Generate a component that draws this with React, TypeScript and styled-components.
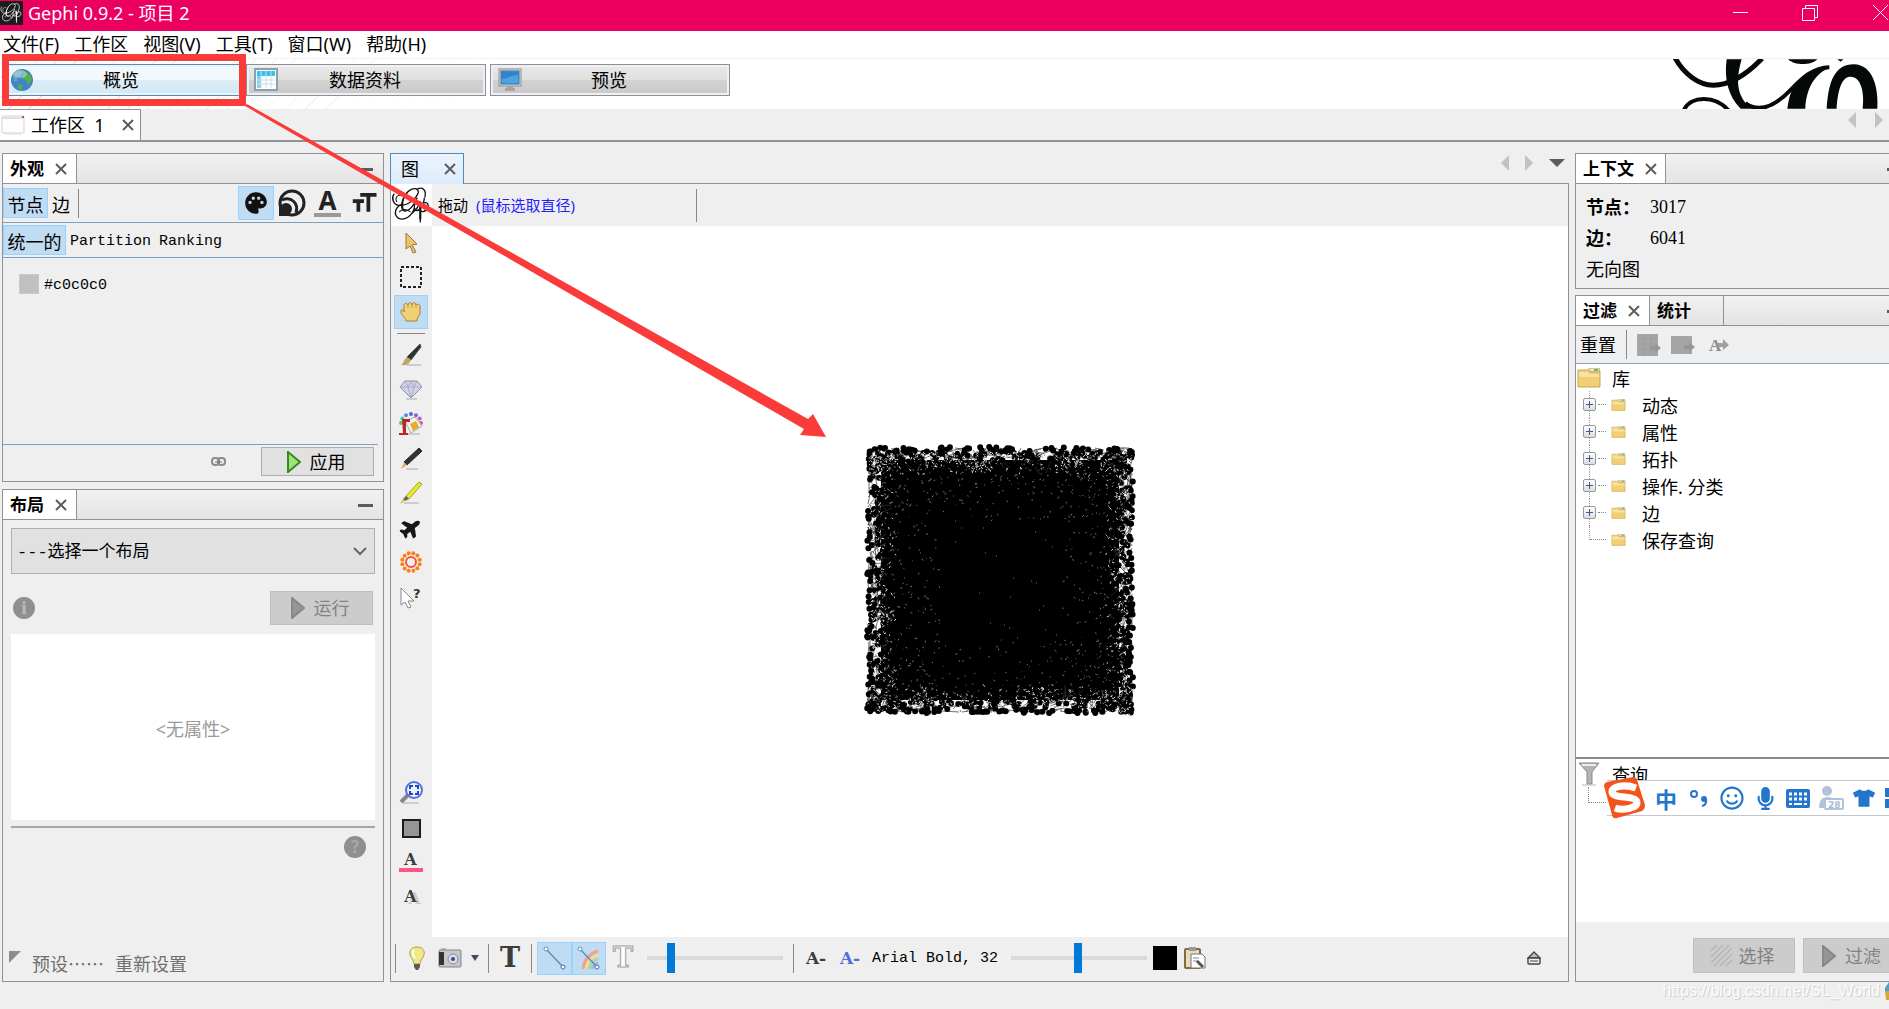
import React from "react";
import styled, { createGlobalStyle } from "styled-components";
import { MdPalette, MdFormatSize } from "react-icons/md";
import { FaPlane, FaRegSmile, FaMicrophone, FaTshirt } from "react-icons/fa";

const UI = `"Noto Sans", "Noto Sans CJK SC", sans-serif`;
const CJK = `"Noto Sans CJK SC", sans-serif`;
const MONO = `"Liberation Mono", "Noto Sans CJK SC", monospace`;
const SERIF = `"Liberation Serif", "Noto Sans CJK SC", serif`;

const line = "#8e929b";
const blueLine = "#7f9fbd";
const face = "#efefef";
const red = "#fb3a3a";

const GlobalStyle = createGlobalStyle`
  * { box-sizing: border-box; }
  body { margin: 0; background: ${face}; color: #000; font: 18px/24px ${UI}; overflow: hidden; }
  button, select, input { font: inherit; color: inherit; margin: 0; }
  svg { display: block; flex: none; }
`;

const Frame = styled.div`
  position: relative;
  min-height: 100vh;
  display: flex;
  flex-direction: column;
  overflow: hidden;
`;

/* ---------- window chrome ---------- */
const TitleBar = styled.header`
  height: 31px;
  display: flex;
  align-items: center;
  background: #ec005f;
  color: #fff;
`;
const Title = styled.h1`
  margin: 0 auto 5px 5px;
  font: 400 18px/24px ${UI};
`;
const TitleIcon = styled.div`
  margin-bottom: 5px;
`;
const WindowButton = styled.button`
  width: 69px;
  height: 31px;
  padding: 0 0 6px;
  border: 0;
  background: none;
  display: flex;
  align-items: center;
  justify-content: center;
  &:last-child { width: 45px; justify-content: flex-end; padding-right: 1px; }
`;
const MenuBar = styled.nav`
  height: 28px;
  display: flex;
  gap: 15px;
  padding: 1px 3px 0;
  background: #fff;
  border-bottom: 1px solid #f2f2f2;
`;
const MenuItem = styled.button`
  border: 0;
  padding: 0;
  height: 24px;
  background: none;
  font: 18px/24px ${UI};
`;
const Banner = styled.div`
  height: 50px;
  display: flex;
  align-items: flex-start;
  gap: 4px;
  padding: 5px 0 0 2px;
  background:
    linear-gradient(90deg, rgba(255, 255, 255, 0.2), #fff 500px),
    repeating-linear-gradient(135deg, #fff 0 13px, #dcdcdc 13px 14px);
`;
const BannerLogo = styled.div`
  margin: -5px 0 0 auto;
`;
const ModeSlot = styled.div`
  position: relative;
  width: 240px;
`;
const ModeButton = styled.button<{ $active?: boolean }>`
  width: 100%;
  height: 32px;
  display: grid;
  grid-template-columns: 24px 1fr 26px;
  align-items: center;
  padding: 0 7px;
  border: 1px solid ${(p) => (p.$active ? "#5f87ac" : "#8b8f99")};
  box-shadow: inset 0 0 0 2px ${(p) => (p.$active ? "#e6f4fb" : "#f0f0f2")};
  background: ${(p) =>
    p.$active
      ? "linear-gradient(#f2f9fd 0 50%, #dcedf6 50%, #d3e8f3)"
      : "linear-gradient(#e9e9e9, #e0e0e0 50%, #d2d2d2 50%, #c9c9c9)"};
`;
const RedFrame = styled.div`
  position: absolute;
  inset: -10px -4px -10px 0;
  border: 7px solid ${red};
  pointer-events: none;
`;
const WorkspaceBar = styled.div`
  height: 33px;
  display: flex;
  align-items: stretch;
  background: ${face};
  border-bottom: 2px solid ${line};
`;
const WorkspaceTab = styled.div`
  width: 141px;
  display: flex;
  align-items: center;
  gap: 6px;
  padding: 0 6px 0 1px;
  background: #fff;
  border: 1px solid ${line};
  border-width: 1px 1px 0 0;
`;
const Grow = styled.div`
  flex: 1;
`;
const Arrows = styled.div<{ $gap: number; $end: number }>`
  display: flex;
  align-items: center;
  margin-left: auto;
  gap: ${(p) => p.$gap}px;
  padding: 0 ${(p) => p.$end}px 10px 0;
`;
const PlainButton = styled.button`
  border: 0;
  padding: 0;
  background: none;
  display: flex;
  align-items: center;
  justify-content: center;
`;

/* ---------- docking panels ---------- */
const Main = styled.main`
  flex: 1;
  display: grid;
  grid-template-columns: 382px 1fr 314px;
  gap: 6px;
  padding: 11px 0 0 2px;
`;
const Column = styled.div<{ $gap: number }>`
  display: flex;
  flex-direction: column;
  gap: ${(p) => p.$gap}px;
  min-width: 0;
`;
const Panel = styled.section<{ $grow?: boolean; $bleed?: boolean }>`
  ${(p) => p.$grow && "flex: 1;"}
  display: flex;
  flex-direction: column;
  border: 1px solid ${line};
  ${(p) => p.$bleed && "border-right: 0;"}
`;
const PanelTabs = styled.div`
  height: 30px;
  display: flex;
  border-bottom: 1px solid ${line};
  background: linear-gradient(#f1f1f1, #e4e4e4);
`;
const PanelTab = styled.div<{ $idle?: boolean }>`
  min-width: 74px;
  display: flex;
  align-items: center;
  gap: 11px;
  padding: 0 8px 0 7px;
  font: 700 17px/22px ${UI};
  background: ${(p) => (p.$idle ? "transparent" : "#fff")};
  border-right: 1px solid ${line};
`;
const MinBar = styled.button<{ $cut?: boolean }>`
  width: 15px;
  height: 3px;
  padding: 0;
  border: 0;
  margin: 14px ${(p) => (p.$cut ? -13 : 10)}px 0 auto;
  background: #5c5c5c;
`;
const Strip = styled.div<{ $h: number }>`
  height: ${(p) => p.$h}px;
  display: flex;
  align-items: center;
  border-bottom: 1px solid ${blueLine};
`;
const Toggle = styled.button<{ $on?: boolean; $w?: number; $h?: number; $mono?: boolean }>`
  height: ${(p) => p.$h ?? 30}px;
  ${(p) => p.$w && `width: ${p.$w}px;`}
  padding: ${(p) => (p.$h ? 0 : 3)}px 3px 0;
  display: flex;
  align-items: center;
  justify-content: center;
  border: 1px solid ${(p) => (p.$on ? "#99d1ff" : "transparent")};
  background: ${(p) => (p.$on ? "#c0dcf3" : "none")};
  ${(p) => p.$mono && `font: 15px/20px ${MONO};`}
`;
const Sep = styled.span<{ $h?: number }>`
  width: 1px;
  height: ${(p) => p.$h ?? 29}px;
  background: #888;
  flex: none;
`;
const Mono = styled.span`
  padding-top: 2px;
  font: 15px/20px ${MONO};
`;
const Underlined = styled.span`
  width: 27px;
  height: 28px;
  font: 700 26px/22px ${UI};
  text-align: center;
  color: #222;
  border-bottom: 4px solid #9a9a9a;
`;
const AppearanceIcons = styled.div`
  margin-left: auto;
  display: flex;
  align-items: center;
  gap: 4px;
  padding-right: 4px;
`;
const ColorRow = styled.div`
  height: 186px;
  display: flex;
  align-items: flex-start;
  gap: 5px;
  padding: 16px;
`;
const Swatch = styled.button<{ $c: string; $s: number; $flat?: boolean }>`
  width: ${(p) => p.$s}px;
  height: ${(p) => p.$s}px;
  padding: 0;
  background: ${(p) => p.$c};
  border: 1px solid ${(p) => (p.$flat ? p.$c : "#c9c9c9")};
`;
const ApplyRow = styled.div`
  height: 37px;
  display: flex;
  align-items: flex-start;
  justify-content: flex-end;
  gap: 35px;
  margin-right: 5px;
  padding: 2px 4px 0 0;
  border-top: 1px solid ${blueLine};
`;
const LinkIcon = styled(PlainButton)`
  height: 28px;
`;
const PushButton = styled.button<{ $w: number; $h: number; $gap?: number }>`
  width: ${(p) => p.$w}px;
  height: ${(p) => p.$h}px;
  flex: none;
  display: flex;
  align-items: center;
  justify-content: center;
  gap: ${(p) => p.$gap ?? 9}px;
  padding: 0 3px 0 0;
  border: 1px solid #adadad;
  background: #e1e1e1;
  &:disabled { color: #838383; background: #ccc; border-color: #bfbfbf; }
`;
const LayoutBody = styled.div`
  flex: 1;
  display: flex;
  flex-direction: column;
  padding: 8px 8px 6px;
`;
const SelectWrap = styled.label`
  display: grid;
  align-items: center;
  & > * { grid-area: 1 / 1; }
  & > svg { justify-self: end; margin-right: 8px; pointer-events: none; }
`;
const Select = styled.select`
  width: 100%;
  height: 46px;
  padding: 4px 5px 0;
  appearance: none;
  border: 1px solid #adadb2;
  border-radius: 0;
  background: #e1e1e1;
  font: 17px/24px ${MONO};
`;
const RunRow = styled.div`
  display: flex;
  align-items: center;
  justify-content: space-between;
  padding: 17px 2px 9px;
`;
const Badge = styled.button`
  width: 22px;
  height: 22px;
  padding: 0;
  border: 0;
  border-radius: 50%;
  background: #8f8f8f;
  color: #b9b9b9;
  font: 700 17px/22px "DejaVu Serif", serif;
`;
const HelpBadge = styled(Badge)`
  align-self: flex-end;
  margin: 8px 9px 0 0;
  color: #a8a8a8;
  font-family: ${UI};
`;
const Properties = styled.div`
  height: 186px;
  display: flex;
  align-items: center;
  justify-content: center;
  padding-top: 3px;
  background: #fff;
  color: #999;
`;
const Rule = styled.hr`
  width: 100%;
  height: 2px;
  margin: 6px 0 0;
  border: 0;
  background: #a6a6a6;
`;
const PresetRow = styled.div`
  margin: auto 0 0 -2px;
  display: flex;
  gap: 11px;
  color: #6f6f6f;
  font: 18px/24px ${CJK};
`;

/* ---------- graph window ---------- */
const GraphWindow = styled.section`
  display: flex;
  flex-direction: column;
  min-width: 0;
`;
const GraphTabs = styled.div`
  height: 31px;
  display: flex;
`;
const GraphTab = styled.div`
  width: 74px;
  display: flex;
  align-items: center;
  justify-content: space-between;
  padding: 0 7px 1px 10px;
  border: 1px solid #4b8cc0;
  border-bottom: 0;
  background: linear-gradient(#ecf4fc, #dcebfc);
`;
const GraphTabFill = styled.div`
  flex: 1;
  display: flex;
  border-bottom: 1px solid ${line};
`;
const GraphBody = styled.div`
  flex: 1;
  display: flex;
  flex-direction: column;
  border: 1px solid ${line};
  border-top: 0;
`;
const MouseBar = styled.div`
  height: 42px;
  display: flex;
  align-items: center;
  font: 15px/20px ${UI};
`;
const MouseLabel = styled.span`
  width: 38px;
  margin-left: 6px;
`;
const MouseHint = styled.button`
  width: 220px;
  padding: 0;
  border: 0;
  background: none;
  color: #1f1fff;
  text-align: left;
  font: 15px/20px ${UI};
`;
const Stage = styled.div`
  flex: 1;
  display: flex;
`;
const Tools = styled.div`
  width: 41px;
  display: flex;
  flex-direction: column;
  padding: 0 2px 23px 0;
`;
const ToolGroup = styled.div<{ $h: number; $end?: boolean }>`
  height: ${(p) => p.$h}px;
  display: flex;
  flex-direction: column;
  align-items: center;
  ${(p) => p.$end && "margin-top: auto;"}
`;
const Tool = styled.button<{ $on?: boolean }>`
  flex: 1;
  width: 34px;
  padding: 0;
  display: flex;
  align-items: center;
  justify-content: center;
  border: 1px solid ${(p) => (p.$on ? "#99d1ff" : "transparent")};
  background: ${(p) => (p.$on ? "#c0dcf3" : "none")};
`;
const ToolRule = styled.hr`
  width: 28px;
  height: 1px;
  margin: 4px auto;
  border: 0;
  background: #888;
`;
const Glyph = styled.span<{ $size: number; $c?: string; $bar?: boolean; $shade?: boolean; $hollow?: boolean }>`
  width: 24px;
  text-align: center;
  font: 700 ${(p) => p.$size}px/${(p) => (p.$bar ? 16 : 24)}px "DejaVu Serif", serif;
  color: ${(p) => p.$c ?? "#3c3c3c"};
  ${(p) => p.$bar && "border-bottom: 4px solid #ff5585;"}
  ${(p) => p.$shade && "text-shadow: 4px 2px 0 #ccc;"}
  ${(p) => p.$hollow && "-webkit-text-stroke: 1px #9d9d9d;"}
`;
const Canvas = styled.div`
  flex: 1;
  display: flex;
  align-items: center;
  justify-content: center;
  padding-bottom: 4px;
  background: #fff;
`;
const BottomBar = styled.div`
  height: 44px;
  display: flex;
  align-items: center;
  padding: 0 27px 2px 4px;
`;
const Cluster = styled.div<{ $gap: number; $ml?: number }>`
  display: flex;
  align-items: center;
  gap: ${(p) => p.$gap}px;
  margin-left: ${(p) => p.$ml ?? 0}px;
`;
const Pair = styled.div`
  display: flex;
`;
const Range = styled.input`
  appearance: none;
  width: 136px;
  height: 30px;
  background: linear-gradient(#dadada, #dadada) center / 100% 4px no-repeat;
  &::-webkit-slider-thumb {
    appearance: none;
    width: 8px;
    height: 30px;
    background: #007ad9;
  }
`;

/* ---------- right column ---------- */
const Stats = styled.dl`
  margin: 0;
  height: 104px;
  padding: 7px 10px 0;
  display: grid;
  grid-template-columns: 64px 1fr;
  grid-auto-rows: 31px;
  align-items: center;
  dt { font-weight: 700; }
  dd { margin: 0; font: 18px/24px ${SERIF}; }
`;
const FilterBar = styled(Strip)`
  gap: 10px;
  padding-left: 4px;
`;
const Tree = styled.ul`
  list-style: none;
  margin: 0;
  padding: 0 1px;
  height: 393px;
  background: #fff;
`;
const TreeRow = styled.li<{ $last?: boolean }>`
  position: relative;
  height: 27px;
  display: flex;
  align-items: center;
  padding-left: 6px;
  &::before {
    content: "";
    position: absolute;
    left: 12px;
    top: 0;
    height: ${(p) => (p.$last ? 14 : 27)}px;
    border-left: 1px dotted #999;
  }
`;
const Expander = styled.button`
  position: relative;
  width: 13px;
  height: 13px;
  padding: 0;
  border: 1px solid #999;
  border-radius: 2px;
  background:
    linear-gradient(#3a55a4, #3a55a4) center / 7px 1px no-repeat,
    linear-gradient(#3a55a4, #3a55a4) center / 1px 7px no-repeat,
    linear-gradient(#fff, #ddd);
`;
const Dots = styled.span<{ $w: number; $ml?: number }>`
  width: ${(p) => p.$w}px;
  margin: 0 5px 0 ${(p) => p.$ml ?? 2}px;
  border-top: 1px dotted #888;
`;
const TreeText = styled.span<{ $gap: number }>`
  margin: 3px 0 0 ${(p) => p.$gap}px;
  line-height: 24px;
`;
const TreeRoot = styled.li`
  height: 27px;
  display: flex;
  align-items: center;
`;
const Queries = styled.div`
  position: relative;
  flex: 1;
  background: #fff;
  border-top: 2px solid #8a8a8a;
`;
const QueryRow = styled.div`
  display: flex;
  padding: 1px 2px 0;
  align-items: center;
`;
const QueryBranch = styled.div`
  width: 18px;
  height: 16px;
  margin-left: 12px;
  border: 1px dotted #888;
  border-width: 0 0 1px 1px;
`;
const Ime = styled.div`
  position: absolute;
  left: 31px;
  right: 0;
  top: 21px;
  height: 36px;
  display: flex;
  align-items: center;
  background: #fff;
  border: 1px solid #c3c6cc;
  border-width: 1px 0;
  color: #2277cd;
`;
const ImeLogo = styled.div`
  margin: 0 8px 0 -4px;
`;
const ImeKeys = styled.div`
  display: flex;
  align-items: center;
  gap: 9px;
`;
const ImeKey = styled(PlainButton)`
  width: 24px;
  height: 30px;
  flex: none;
  font: 700 22px/28px ${CJK};
`;
const FilterActions = styled.div`
  height: 59px;
  display: flex;
  justify-content: flex-end;
  gap: 8px;
  padding-top: 16px;
  margin-right: -14px;
`;
const StatusBar = styled.footer`
  height: 27px;
  display: flex;
  justify-content: flex-end;
  align-items: center;
  gap: 5px;
  padding-bottom: 10px;
`;
const Watermark = styled.span`
  font: 16px/18px "Liberation Sans", sans-serif;
  color: #fbfbfb;
  text-shadow: 1px 1px 0 #d0d0d0;
`;
const ArrowLayer = styled.svg`
  position: absolute;
  left: 245px;
  top: 104px;
  pointer-events: none;
`;

/* ---------- drawings ---------- */
const Svg = ({ w = 24, h = w, box, children }: { w?: number; h?: number; box?: string; children: React.ReactNode }) => (
  <svg width={w} height={h} viewBox={box ?? `0 0 ${w} ${h}`} fill="none" aria-hidden="true">
    {children}
  </svg>
);
const Cross = () => (
  <Svg w={12}><path d="M1 1L11 11M11 1L1 11" stroke="#5d5d5d" strokeWidth="2" /></Svg>
);
const Tri = ({ dir, c = "#c2c2c2" }: { dir: "l" | "r" | "d"; c?: string }) => (
  <Svg w={dir === "d" ? 16 : 8} h={dir === "d" ? 8 : 16}>
    <path d={dir === "l" ? "M8 0V16L0 8z" : dir === "r" ? "M0 0V16L8 8z" : "M0 0H16L8 8z"} fill={c} />
  </Svg>
);
const GephiMark = ({ w, h, ink, paper }: { w: number; h: number; ink: string; paper: string }) => (
  <Svg w={w} h={h} box="36 118 120 124">
    <rect x="36" y="118" width="120" height="124" fill={paper} />
    <g stroke={ink} strokeWidth="4" strokeLinecap="round">
      <path d="M44 148C36 160 42 178 58 181C84 184 112 160 116 143C118 130 100 127 86 140C68 158 62 186 72 196C86 204 106 178 112 160" />
      <path d="M70 176C48 186 42 206 56 218C76 230 98 210 104 190M96 206C108 196 122 178 118 172C108 160 98 190 110 196C122 198 132 180 134 160" />
      <path d="M112 134C128 124 140 136 136 156M122 170V230M122 184C130 168 148 170 145 186C142 200 126 202 122 196" />
      <path d="M52 170C46 158 56 148 66 152M60 200C70 190 84 192 92 200" strokeWidth="3" />
    </g>
    <path d="M92 134C72 152 66 184 76 198L68 192C62 176 74 146 92 134Z" fill={ink} />
    <path d="M119 172H125V222H119z" fill={ink} />
  </Svg>
);
const BannerMark = () => (
  <Svg w={217} h={50} box="336 178 651 149">
    <g stroke="#060909" strokeWidth="13">
      <path d="M345 174C372 222 415 256 460 256C512 256 558 226 606 176" strokeWidth="15" />
      <path d="M372 330C392 288 464 284 506 332" strokeWidth="12" />
      <path d="M556 310C600 342 648 316 692 270C724 238 756 203 808 202" strokeWidth="12" />
    </g>
    <g fill="#060909">
      <path d="M500 178H545C528 236 526 292 578 327H542C504 288 492 236 500 178z" />
      <path d="M808 204C764 222 738 268 736 327H682C690 280 690 262 752 214z" />
      <path d="M684 178C704 197 752 198 772 178zM832 178H850L842 186z" />
      <path d="M800 327C805 248 822 193 882 193C938 194 956 262 952 327H908C914 280 904 230 870 231C840 232 832 290 830 327z" />
    </g>
  </Svg>
);
const Globe = () => (
  <Svg>
    <circle cx="12" cy="12" r="11" fill="#3f83c8" />
    <path d="M3 8C6 2 11 1 13 4L10 8L7 9L8 13L4 14z" fill="#5ba5b4" />
    <path d="M14 4L20 6L22 12L18 17L16 12L12 11zM8 16L13 17L11 22L8 20z" fill="#54b04f" />
    <ellipse cx="10" cy="6" rx="7" ry="4" fill="#fff" opacity=".35" />
  </Svg>
);
const Sheet = () => (
  <Svg>
    <rect x="1" y="1" width="22" height="21" fill="#fff" stroke="#8aa0aa" strokeWidth="2" />
    <path d="M3 3H21V8H3z" fill="#35c0f4" /><path d="M3 8H7V20H3z" fill="#7fd4f5" />
    <path d="M3 12H21M3 16H21M7 3V20M12 3V20M17 3V20" stroke="#c6e0ea" />
  </Svg>
);
const Monitor = () => (
  <Svg>
    <rect x="1" y="1" width="22" height="17" fill="#ddd" stroke="#8e8e8e" />
    <rect x="3" y="3" width="18" height="13" fill="#4ba2e4" stroke="#2d70ae" />
    <path d="M4 11C10 10 14 7 20 7V4H4z" fill="#3382cb" />
    <path d="M9 18H15V20H17V23H7V20H9z" fill="#a5a5a5" />
  </Svg>
);
const WindowIcon = () => (
  <Svg w={24} h={20}>
    <rect x="1" y="1" width="22" height="17" rx="1" fill="#fdfdfd" stroke="#d3d3d3" />
    <path d="M1 2H23V4H1z" fill="#e3dfe0" /><path d="M21 1H23V3H21z" fill="#c7475c" />
    <path d="M3 19H21" stroke="#ddd" />
  </Svg>
);
const Play = ({ off }: { off?: boolean }) => (
  <Svg w={14} h={22}>
    <path d="M1 1L13 11L1 21z" fill={off ? "#969696" : "#a5e07c"} stroke={off ? "#888" : "#2f8f1d"} strokeWidth="2" />
  </Svg>
);
const SizeRings = () => (
  <Svg w={28}>
    <g stroke="#222" strokeWidth="3">
      <circle cx="14" cy="14" r="12" />
      <path d="M4 11C13 7 21 14 18 24" />
    </g>
    <path d="M1 14V27H14L9 22L4 18z" fill="#222" />
    <circle cx="8" cy="20" r="6" fill="#222" />
  </Svg>
);
const Folder = ({ w, h }: { w: number; h: number }) => (
  <Svg w={w} h={h} box="0 0 24 20">
    <path d="M12 0H22L23 4H12z" fill="#f5e6ae" stroke="#c9a85a" /><path d="M17 1H21V3H17z" fill="#4ab6cc" />
    <path d="M1 2H11L13 4H23V19H1z" fill="#f0cf75" stroke="#cda650" />
    <path d="M2 4H11L13 6H22V9H2z" fill="#f8e2a0" />
  </Svg>
);
const toolTop: React.ReactNode[] = [
  <Svg><path d="M7 2L18 13L13 14L17 21L14 22L11 15L7 18z" fill="#ecc56a" stroke="#9c7733" /></Svg>,
  <Svg><rect x="2" y="2" width="20" height="20" stroke="#222" strokeWidth="2" strokeDasharray="3 2" /></Svg>,
  <Svg>
    <path d="M5 7C4 3 8 2 9 5C9 2 13 2 13 5C13 2 17 2 17 5C19 3 22 5 21 8V14C19 17 18 18 18 21H7C7 17 1 15 2 11C2 9 4 9 5 12z" fill="#f1cf74" stroke="#a5813c" />
    <path d="M9 5V8M13 5V8M17 5V8" stroke="#c29a4c" />
  </Svg>,
];
const toolMid: React.ReactNode[] = [
  <Svg><path d="M8 22H22" stroke="#ccc" strokeWidth="2" /><path d="M21 1L22 4L12 17L8 14z" fill="#303030" stroke="#555" /><path d="M8 14L12 17C10 22 5 23 2 22C5 20 5 16 8 14z" fill="#bba66c" /></Svg>,
  <Svg><path d="M7 21H18" stroke="#ccc" strokeWidth="2" /><path d="M6 3H18L23 9L12 20L1 9z" fill="#d2d3ea" stroke="#8b8daa" /><path d="M1 9H23M6 3L9 9L12 20L15 9L18 3M9 9L12 3L15 9" stroke="#a9abc6" /></Svg>,
  <Svg>
    {["#5fc45f", "#45c6ad", "#4d8ee5", "#5963d8", "#8d5fcb", "#c857c2", "#e05590"].map((c, i) => (
      <circle key={c} cx={12 - 10 * Math.cos((i * Math.PI) / 6)} cy={11 - 9 * Math.sin((i * Math.PI) / 6)} r="2" fill={c} />
    ))}
    <path d="M8 22H21" stroke="#ccc" strokeWidth="2" />
    <path d="M6 9L16 5L23 14L12 21z" fill="#f4f4f4" stroke="#aaa" /><path d="M11 12L17 9L20 15L14 19z" fill="#e7ab26" />
    <path d="M3 7H11V10H7V21H9V23H0V21H4z" fill="#b9252a" />
  </Svg>,
  <Svg><path d="M7 22H19" stroke="#ccc" strokeWidth="2" /><path d="M20 1L23 4L8 18L5 15z" fill="#333" stroke="#222" /><path d="M5 15L8 18L2 22z" fill="#d3b070" /></Svg>,
  <Svg><path d="M5 22H20" stroke="#ccc" strokeWidth="2" /><path d="M20 1L23 3L10 18L7 15z" fill="#e8e82c" stroke="#aaa51b" /><path d="M7 15L10 18L6 20L4 18z" fill="#666" /><path d="M4 18L6 20L1 23z" fill="#cccc25" /></Svg>,
  <FaPlane size={22} color="#161616" style={{ transform: "rotate(-38deg)" }} />,
  <Svg>
    <circle cx="12" cy="12" r="5" stroke="#fb5236" strokeWidth="2" />
    {Array.from({ length: 12 }, (_, i) => {
      const a = (i * Math.PI) / 6 + 0.26;
      return <circle key={i} cx={12 + 9 * Math.cos(a)} cy={12 + 9 * Math.sin(a)} r="2" fill="#ff7d18" />;
    })}
  </Svg>,
  <Svg><path d="M2 3V20L6 17L9 23L12 22L9 16H15z" fill="#fff" stroke="#888" /><text x="14" y="13" fontFamily="DejaVu Sans" fontWeight="700" fontSize="13" fill="#333">?</text></Svg>,
];
const toolEnd: React.ReactNode[] = [
  <Svg><path d="M4 22H20" stroke="#ccc" strokeWidth="2" /><path d="M9 14L2 21" stroke="#888" strokeWidth="4" /><circle cx="15" cy="9" r="8" fill="#eaf1ff" stroke="#5272dc" strokeWidth="2" /><path d="M11 8V5H14M16 5H19V8M19 10V13H16M14 13H11V10" stroke="#2446b4" strokeWidth="2" /></Svg>,
  <Svg><rect x="4" y="4" width="17" height="17" fill="#969696" stroke="#1d1d1d" strokeWidth="2" /></Svg>,
  <Glyph $size={16} $bar>A</Glyph>,
  <Glyph $size={16} $shade>A</Glyph>,
];
const toolNames = ["选择", "矩形选择", "拖动", "画笔", "大小", "填充", "节点铅笔", "边铅笔", "最短路径", "热图", "编辑", "居中", "背景色", "标签颜色", "标签阴影"];

const EdgeIcon = ({ rainbow }: { rainbow?: boolean }) => (
  <Svg w={26}>
    {rainbow && (
      <g strokeWidth="3">
        <path d="M7 24C8 15 13 9 22 6" stroke="#f3a094" /><path d="M10 24C11 17 15 12 22 10" stroke="#efdc9a" />
        <path d="M13 24C14 19 17 15 22 14" stroke="#a6d8a8" /><path d="M16 24C17 21 19 19 22 18" stroke="#b1b2e8" />
      </g>
    )}
    <path d="M4 4L21 22" stroke="#5a8fc2" strokeWidth="1.5" />
    <circle cx="4" cy="4" r="2" fill="#fff" stroke="#5a8fc2" /><circle cx="21" cy="22" r="2" fill="#fff" stroke="#3c6bb0" />
  </Svg>
);

/* A dense hairball: dots around a ragged square, with light showing through near its border. */
const SIZE = 276;
function buildGraph() {
  let seed = 90217;
  const rnd = () => {
    seed = (seed * 1664525 + 1013904223) % 4294967296;
    return seed / 4294967296;
  };
  const side = (d: number): [number, number] => {
    const t = 6 + rnd() * (SIZE - 12);
    const k = Math.floor(rnd() * 4);
    return k === 0 ? [t, d] : k === 1 ? [t, SIZE - d] : k === 2 ? [d, t] : [SIZE - d, t];
  };
  const dot = (x: number, y: number, r: number) =>
    `M${(x - r).toFixed(1)} ${y.toFixed(1)}a${r} ${r} 0 1 0 ${2 * r} 0a${r} ${r} 0 1 0 ${-2 * r} 0`;
  const jot = (x: number, y: number, len: number) =>
    `M${x.toFixed(1)} ${y.toFixed(1)}l${((rnd() - 0.5) * len).toFixed(1)} ${((rnd() - 0.5) * len).toFixed(1)}`;
  let dots = "";
  let strands = "";
  let holes = "";
  let faint = "";
  for (let i = 0; i < 520; i++) {
    const [x, y] = side(5 + rnd() * 12);
    dots += dot(x, y, 3);
  }
  for (let i = 0; i < 380; i++) {
    const [x, y] = side(14 + rnd() * 14);
    dots += dot(x, y, 3);
  }
  for (let i = 0; i < 520; i++) {
    const [x, y] = side(6 + rnd() * 10);
    const c = (n: number) => Math.min(SIZE - 6, Math.max(6, n)).toFixed(0);
    strands += `M${c(x)} ${c(y)}L${c(x + (rnd() - 0.5) * 36)} ${c(y + (rnd() - 0.5) * 36)}`;
  }
  for (let i = 0; i < 640; i++) {
    const [x, y] = side(11 + Math.pow(rnd(), 1.7) * 22);
    holes += jot(x, y, 5);
  }
  for (let n = 0; n < 34; n++) {
    const [cx, cy] = side(14 + rnd() * 12);
    for (let i = 0; i < 12; i++) holes += jot(cx + (rnd() - 0.5) * 16, cy + (rnd() - 0.5) * 10, 4);
  }
  for (let i = 0; i < 1100; i++) {
    const [x, y] = side(14 + Math.pow(rnd(), 1.9) * 64);
    faint += jot(x, y, 4);
  }
  for (let i = 0; i < 60; i++) faint += `M${(30 + rnd() * 216).toFixed(0)} ${(30 + rnd() * 216).toFixed(0)}h1`;
  return { dots, strands, holes, faint };
}
const graph = buildGraph();
const Hairball = () => (
  <svg width={SIZE} height={SIZE} viewBox={`0 0 ${SIZE} ${SIZE}`} role="img" aria-label="图">
    <rect x="19" y="18" width="238" height="240" />
    <path d={graph.strands} stroke="#333" strokeWidth="0.7" />
    <path d={graph.dots} />
    <path d={graph.holes} stroke="#dedede" strokeWidth="1" />
    <path d={graph.faint} stroke="#808080" strokeWidth="0.9" />
  </svg>
);

const menus = ["文件(F)", "工作区", "视图(V)", "工具(T)", "窗口(W)", "帮助(H)"];
const library = ["动态", "属性", "拓扑", "操作. 分类", "边", "保存查询"];

export default function App() {
  return (
    <Frame>
      <GlobalStyle />
      <TitleBar>
        <TitleIcon><GephiMark w={23} h={24} ink="#eee" paper="#1c1c1c" /></TitleIcon>
        <Title>Gephi 0.9.2 - 项目 2</Title>
        <WindowButton aria-label="最小化"><Svg w={15}><path d="M0 7.5H15" stroke="#fff" /></Svg></WindowButton>
        <WindowButton aria-label="还原"><Svg w={16}><path d="M.5 3.5H12.5V15.5H.5zM3.5 3.5V.5H15.5V12.5H12.5" stroke="#fff" /></Svg></WindowButton>
        <WindowButton aria-label="关闭"><Svg w={15}><path d="M0 0L15 15M15 0L0 15" stroke="#fff" /></Svg></WindowButton>
      </TitleBar>
      <MenuBar>{menus.map((m) => <MenuItem key={m}>{m}</MenuItem>)}</MenuBar>
      <Banner>
        <ModeSlot>
          <ModeButton $active><Globe />概览</ModeButton>
          <RedFrame />
        </ModeSlot>
        <ModeSlot><ModeButton><Sheet />数据资料</ModeButton></ModeSlot>
        <ModeSlot><ModeButton><Monitor />预览</ModeButton></ModeSlot>
        <BannerLogo><BannerMark /></BannerLogo>
      </Banner>
      <WorkspaceBar>
        <WorkspaceTab>
          <WindowIcon />
          工作区&nbsp; 1
          <Grow />
          <PlainButton aria-label="关闭工作区"><Cross /></PlainButton>
        </WorkspaceTab>
        <Arrows $gap={19} $end={6}><Tri dir="l" /><Tri dir="r" /></Arrows>
      </WorkspaceBar>

      <Main>
        <Column $gap={7}>
          <Panel>
            <PanelTabs>
              <PanelTab>外观<PlainButton aria-label="关闭"><Cross /></PlainButton></PanelTab>
              <MinBar aria-label="最小化" />
            </PanelTabs>
            <Strip $h={39}>
              <Toggle $on $w={45}>节点</Toggle>
              <Toggle $w={26}>边</Toggle>
              <Cluster $gap={0} $ml={4}><Sep /></Cluster>
              <AppearanceIcons>
                <Toggle $on $w={36} $h={34} aria-label="颜色"><MdPalette size={26} color="#111" /></Toggle>
                <PlainButton aria-label="大小"><SizeRings /></PlainButton>
                <Toggle $w={35} $h={34} aria-label="标签颜色"><Underlined>A</Underlined></Toggle>
                <PlainButton aria-label="标签尺寸"><MdFormatSize size={30} color="#222" /></PlainButton>
              </AppearanceIcons>
            </Strip>
            <Strip $h={35}>
              <Toggle $on $w={63}>统一的</Toggle>
              <Toggle $mono>Partition</Toggle>
              <Toggle $mono>Ranking</Toggle>
            </Strip>
            <ColorRow>
              <Swatch $c="#c0c0c0" $s={20} aria-label="#c0c0c0" />
              <Mono>#c0c0c0</Mono>
            </ColorRow>
            <ApplyRow>
              <LinkIcon aria-label="链接">
                <Svg w={15} h={9}><rect x="1" y="1" width="7" height="7" rx="3" stroke="#8c8c8c" strokeWidth="2" /><rect x="7" y="1" width="7" height="7" rx="3" stroke="#8c8c8c" strokeWidth="2" /><path d="M4 5H11" stroke="#777" /></Svg>
              </LinkIcon>
              <PushButton $w={113} $h={29}><Play />应用</PushButton>
            </ApplyRow>
          </Panel>

          <Panel $grow>
            <PanelTabs>
              <PanelTab>布局<PlainButton aria-label="关闭"><Cross /></PlainButton></PanelTab>
              <MinBar aria-label="最小化" />
            </PanelTabs>
            <LayoutBody>
              <SelectWrap>
                <Select aria-label="布局"><option>---选择一个布局</option></Select>
                <Svg w={14} h={9}><path d="M1 1L7 7L13 1" stroke="#666" strokeWidth="2" /></Svg>
              </SelectWrap>
              <RunRow>
                <Badge aria-label="信息">i</Badge>
                <PushButton disabled $w={103} $h={34}><Play off />运行</PushButton>
              </RunRow>
              <Properties>&lt;无属性&gt;</Properties>
              <Rule />
              <HelpBadge aria-label="帮助">?</HelpBadge>
              <PresetRow>
                <Svg w={12}><path d="M0 0H12L0 12z" fill="#8c8c8c" /></Svg>
                <span>预设……</span>
                <span>重新设置</span>
              </PresetRow>
            </LayoutBody>
          </Panel>
        </Column>

        <GraphWindow>
          <GraphTabs>
            <GraphTab>图<PlainButton aria-label="关闭"><Cross /></PlainButton></GraphTab>
            <GraphTabFill>
              <Arrows $gap={16} $end={4}><Tri dir="l" /><Tri dir="r" /><Tri dir="d" c="#5b5b5b" /></Arrows>
            </GraphTabFill>
          </GraphTabs>
          <GraphBody>
            <MouseBar>
              <GephiMark w={41} h={42} ink="#111" paper="#fff" />
              <MouseLabel>拖动</MouseLabel>
              <MouseHint>(鼠标选取直径)</MouseHint>
              <Sep $h={33} />
            </MouseBar>
            <Stage>
              <Tools>
                <ToolGroup $h={103}>
                  {toolTop.map((t, i) => <Tool key={i} $on={i === 2} aria-label={toolNames[i]}>{t}</Tool>)}
                </ToolGroup>
                <ToolRule />
                <ToolGroup $h={276}>
                  {toolMid.map((t, i) => <Tool key={i} aria-label={toolNames[i + 3]}>{t}</Tool>)}
                </ToolGroup>
                <ToolGroup $h={138} $end>
                  {toolEnd.map((t, i) => <Tool key={i} aria-label={toolNames[i + 11]}>{t}</Tool>)}
                </ToolGroup>
              </Tools>
              <Canvas><Hairball /></Canvas>
            </Stage>
            <BottomBar>
              <Cluster $gap={9}>
                <Sep />
                <PlainButton aria-label="灯光">
                  <Svg><path d="M12 1C6 1 4 5 5 9C6 12 9 14 9 18H15C15 14 18 12 19 9C20 5 18 1 12 1z" fill="#efe98a" stroke="#b39c3c" /><path d="M9 4C7 6 8 9 10 12" stroke="#fff" strokeWidth="2" /><path d="M9 18H15V21L13 24H11L9 21z" fill="#5a5a5a" /></Svg>
                </PlainButton>
                <PlainButton aria-label="截图">
                  <Svg><rect x="1" y="4" width="22" height="17" rx="1" fill="#c6c6cc" stroke="#85858b" /><path d="M1 6H6V19H1z" fill="#333" /><circle cx="15" cy="13" r="5" fill="#dcdce4" stroke="#8a8a95" /><circle cx="15" cy="13" r="2" fill="#2c4c9c" /><path d="M3 3H8" stroke="#888" /></Svg>
                </PlainButton>
                <PlainButton aria-label="更多"><Svg w={8} h={6}><path d="M0 0H8L4 6z" fill="#3f4d60" /></Svg></PlainButton>
                <Sep />
                <PlainButton aria-label="标签"><Glyph $size={27}>T</Glyph></PlainButton>
                <Sep />
              </Cluster>
              <Cluster $gap={5} $ml={5}>
                <Pair>
                  <Toggle $on $w={35} $h={33} aria-label="显示边"><EdgeIcon /></Toggle>
                  <Toggle $on $w={34} $h={33} aria-label="边颜色"><EdgeIcon rainbow /></Toggle>
                </Pair>
                <PlainButton aria-label="边标签"><Glyph $size={27} $c="#fff" $hollow>T</Glyph></PlainButton>
              </Cluster>
              <Cluster $gap={10} $ml={12}>
                <Range type="range" aria-label="边宽" defaultValue={16} />
                <Sep />
                <PlainButton aria-label="尺寸模式"><Glyph $size={17}>A-</Glyph></PlainButton>
                <PlainButton aria-label="颜色模式"><Glyph $size={17} $c="#4f6fd6">A-</Glyph></PlainButton>
                <PlainButton><Mono>Arial Bold, 32</Mono></PlainButton>
              </Cluster>
              <Cluster $gap={6} $ml={13}>
                <Range type="range" aria-label="字号" defaultValue={49} />
                <Swatch $c="#000" $s={24} $flat aria-label="字体颜色" />
                <PlainButton aria-label="属性">
                  <Svg><rect x="2" y="3" width="15" height="19" rx="1" fill="#e8dcc0" stroke="#846a3f" strokeWidth="2" /><rect x="6" y="1" width="7" height="4" fill="#999" /><path d="M8 8H19L22 11V22H8z" fill="#fff" stroke="#777" /><path d="M10 12H16M10 15H15" stroke="#888" /><path d="M14 15L20 21" stroke="#555" strokeWidth="3" /></Svg>
                </PlainButton>
              </Cluster>
              <Grow />
              <PlainButton aria-label="展开">
                <Svg w={14} h={14}><path d="M7 1L13 7H1z" fill="#bbb" stroke="#444" strokeWidth="1.4" /><rect x="1" y="7" width="12" height="6" rx="1" fill="#eee" stroke="#444" strokeWidth="1.4" /><path d="M3 10H11" stroke="#444" /></Svg>
              </PlainButton>
            </BottomBar>
          </GraphBody>
        </GraphWindow>

        <Column $gap={6}>
          <Panel $bleed>
            <PanelTabs>
              <PanelTab>上下文<PlainButton aria-label="关闭"><Cross /></PlainButton></PanelTab>
              <MinBar $cut aria-label="最小化" />
            </PanelTabs>
            <Stats>
              <dt>节点：</dt><dd>3017</dd>
              <dt>边：</dt><dd>6041</dd>
              <div>无向图</div>
            </Stats>
          </Panel>
          <Panel $bleed $grow>
            <PanelTabs>
              <PanelTab>过滤<PlainButton aria-label="关闭"><Cross /></PlainButton></PanelTab>
              <PanelTab $idle>统计</PanelTab>
              <MinBar $cut aria-label="最小化" />
            </PanelTabs>
            <FilterBar $h={38}>
              <PlainButton>重置</PlainButton>
              <Sep />
              <PlainButton disabled aria-label="导出列"><Svg><path d="M0 1H21V23H0z" fill="#a5a5a5" /><path d="M2 6H19M2 11H19M2 16H19M7 1V23M14 1V23" stroke="#9d9d9d" /><path d="M13 13H18V10L24 15L18 20V17H13z" fill="#979797" /></Svg></PlainButton>
              <PlainButton disabled aria-label="导出图"><Svg><path d="M0 3H21V21H0z" fill="#a5a5a5" /><path d="M13 12H18V9L24 14L18 19V16H13z" fill="#979797" /></Svg></PlainButton>
              <PlainButton disabled aria-label="导出标签"><Svg><text x="4" y="18" fontFamily="Liberation Serif" fontWeight="700" fontSize="17" fill="#8c8c8c">A</text><path d="M13 10H18V6L24 12L18 17V14H13z" fill="#a0a0a0" /></Svg></PlainButton>
            </FilterBar>
            <Tree>
              <TreeRoot><Folder w={24} h={20} /><TreeText $gap={11}>库</TreeText></TreeRoot>
              {library.map((name, i) => {
                const last = i === library.length - 1;
                return (
                  <TreeRow key={name} $last={last}>
                    {!last && <Expander aria-label={`展开 ${name}`} />}
                    <Dots $w={last ? 16 : 8} $ml={last ? 7 : 2} />
                    <Folder w={15} h={12} />
                    <TreeText $gap={16}>{name}</TreeText>
                  </TreeRow>
                );
              })}
            </Tree>
            <Queries>
              <QueryRow>
                <Svg w={22} h={24}><path d="M1 1H21L14 10V22H9V10z" fill="#b3b3b7" stroke="#8b8b8f" /><path d="M4 3H18" stroke="#eee" strokeWidth="2" /><path d="M4 23H18" stroke="#bbb" /></Svg>
                <TreeText $gap={12}>查询</TreeText>
              </QueryRow>
              <QueryBranch />
              <Ime>
                <ImeLogo>
                  <Svg w={43} h={42}>
                    <path d="M4 5L30 0Q33 0 34 3L42 28Q42 32 39 34L14 41Q10 42 9 38L1 9Q1 6 4 5z" fill="#f4541c" />
                    <path d="M33 11C22 7 9 9 9 15C9 22 33 18 34 25C35 31 20 34 12 31" stroke="#fff" strokeWidth="7" />
                  </Svg>
                </ImeLogo>
                <ImeKeys>
                  <ImeKey>中</ImeKey>
                  <ImeKey aria-label="标点"><Svg w={18}><circle cx="4" cy="5" r="3" stroke="#2277cd" strokeWidth="2" /><circle cx="14" cy="10" r="3" fill="#2277cd" /><path d="M16 10Q17 16 12 17" stroke="#2277cd" strokeWidth="2" /></Svg></ImeKey>
                  <ImeKey aria-label="表情"><FaRegSmile size={24} /></ImeKey>
                  <ImeKey aria-label="语音"><FaMicrophone size={23} /></ImeKey>
                  <ImeKey aria-label="键盘"><Svg w={24} h={19}><rect width="24" height="19" rx="2" fill="#2277cd" /><path d="M3 5H21M3 10H21" stroke="#fff" strokeWidth="3" strokeDasharray="3 2" /><path d="M3 15H6M8 15H16M18 15H21" stroke="#fff" strokeWidth="2" /></Svg></ImeKey>
                  <ImeKey aria-label="账户"><Svg w={26} h={24}><circle cx="9" cy="5" r="5" fill="#b4c1da" /><path d="M1 22Q1 11 9 11Q16 11 17 16V22z" fill="#b4c1da" /><rect x="7" y="13" width="18" height="10" rx="1" fill="#fff" stroke="#b4c1da" strokeWidth="2" /><text x="10" y="22" fontFamily="DejaVu Sans" fontWeight="700" fontSize="9" fill="#a9b8d4">28</text></Svg></ImeKey>
                  <ImeKey aria-label="皮肤"><FaTshirt size={22} /></ImeKey>
                  <ImeKey aria-label="工具箱"><Svg w={24} h={20}><path d="M0 0H9V9H0zM11 0H20V9H11zM0 11H9V20H0zM11 11H20V20H11z" fill="#2277cd" /></Svg></ImeKey>
                </ImeKeys>
              </Ime>
            </Queries>
            <FilterActions>
              <PushButton disabled $w={102} $h={35} $gap={7}>
                <Svg w={21} h={22}><path d="M0 6L6 0M0 12L12 0M0 18L18 0M3 21L21 3M9 21L21 9M15 21L21 15" stroke="#b5b5b5" strokeWidth="1.5" /></Svg>
                选择
              </PushButton>
              <PushButton disabled $w={100} $h={35}><Play off />过滤</PushButton>
            </FilterActions>
          </Panel>
        </Column>
      </Main>
      <StatusBar>
        <Watermark>https://blog.csdn.net/SL_World</Watermark>
        <Svg w={4} h={18}><path d="M4 0L0 6V10H4z" fill="#4f9fcb" /><path d="M0 9H4V18H1z" fill="#d7a53a" /></Svg>
      </StatusBar>
      <ArrowLayer width="582" height="334" viewBox="0 0 582 334" aria-hidden="true">
        <path d="M0 2L2 0L563 315L568 310L581 333L555 331L559 325z" fill={red} />
      </ArrowLayer>
    </Frame>
  );
}
